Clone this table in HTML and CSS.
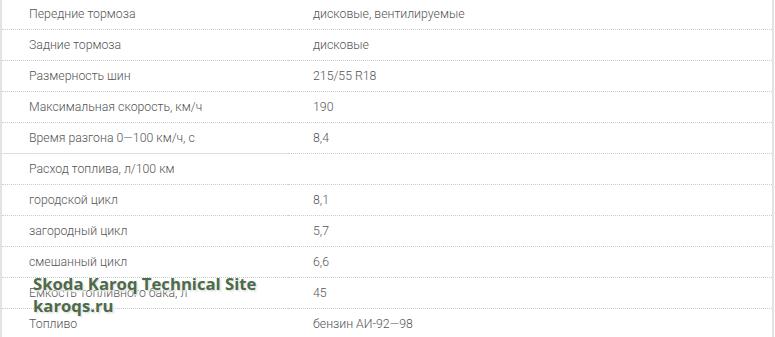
FILE: index.html
```html
<!DOCTYPE html>
<html lang="ru">
<head>
<meta charset="utf-8">
<title>Технические характеристики</title>
<link rel="stylesheet" href="styles.css">
</head>
<body>
<div class="frame">
  <div class="specs">
    <div class="row"><div class="name">Передние тормоза</div><div class="val">дисковые, вентилируемые</div></div>
    <div class="row"><div class="name">Задние тормоза</div><div class="val">дисковые</div></div>
    <div class="row"><div class="name">Размерность шин</div><div class="val">215/55 R18</div></div>
    <div class="row"><div class="name">Максимальная скорость, км/ч</div><div class="val">190</div></div>
    <div class="row"><div class="name solid">Время разгона 0—100 км/ч, с</div><div class="val">8,4</div></div>
    <div class="row"><div class="name">Расход топлива, л/100 км</div><div class="val"></div></div>
    <div class="row"><div class="name">городской цикл</div><div class="val">8,1</div></div>
    <div class="row"><div class="name">загородный цикл</div><div class="val">5,7</div></div>
    <div class="row"><div class="name">смешанный цикл</div><div class="val">6,6</div></div>
    <div class="row"><div class="name">Емкость топливного бака, л</div><div class="val">45</div></div>
    <div class="row"><div class="name">Топливо</div><div class="val">бензин АИ-92—98</div></div>
  </div>
  <div class="watermark">Skoda Karoq Technical Site<br>karoqs.ru</div>
</div>
</body>
</html>
```
FILE: styles.css
```css
html, body {
  margin: 0;
  padding: 0;
  background: #fff;
  overflow: hidden;
}
.frame {
  position: relative;
  width: 770px;
  height: 338px;
  overflow: hidden;
  border-left: 2px solid #dfe4e8;
  border-right: 2px solid #dfe4e8;
  margin-top: -1px;
}
.specs {
  font-family: Roboto, "Liberation Sans", sans-serif;
  font-weight: 300;
  font-size: 12.3px;
  color: #555;
}
.row {
  display: grid;
  grid-template-columns: 286px 1fr;
}
.name, .val {
  height: 30px;
  line-height: 30px;
  white-space: nowrap;
  border-bottom: 1px dotted #c9cdd0;
}
.name {
  padding-left: 27px;
}
.val {
  padding-left: 25px;
}
.name.solid {
  border-bottom: 1px solid #dde1e4;
}
.watermark {
  position: absolute;
  left: 31px;
  top: 274px;
  font-family: "Open Sans", sans-serif;
  font-weight: 700;
  font-size: 16.7px;
  line-height: 22px;
  color: #4b6b4b;
  text-shadow: 1px 1px 1px #e2e2e2, 2px 2px 2px #efefef;
}
```
